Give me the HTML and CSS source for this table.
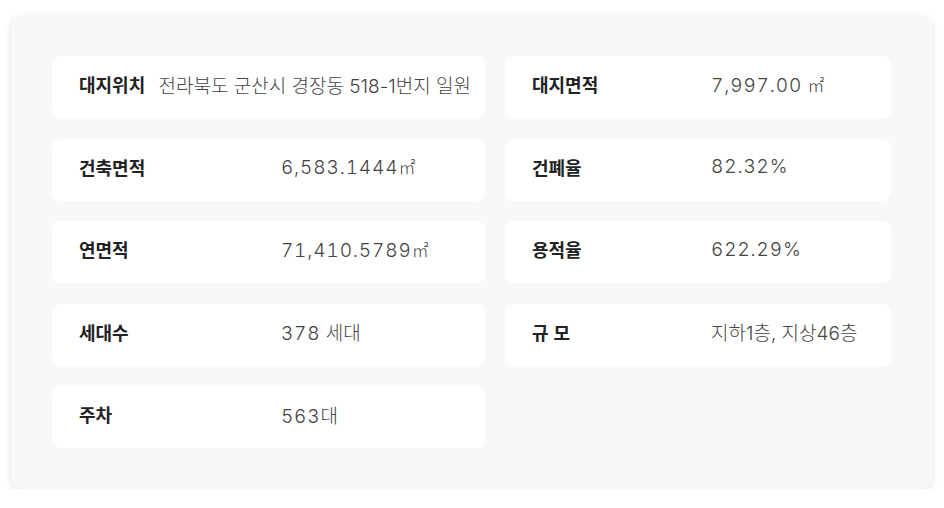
FILE: index.html
```html
<!DOCTYPE html>
<html lang="ko">
<head>
<meta charset="utf-8">
<link rel="stylesheet" href="styles.css">
</head>
<body>
<section class="panel">
  <div class="grid">
    <div class="card"><span class="label">대지위치</span><span class="value">전라북도 군산시 경장동 518-1번지 일원</span></div>
    <div class="card"><span class="label">대지면적</span><span class="value"><span class="num">7,997.00</span> <span class="unit">㎡</span></span></div>
    <div class="card"><span class="label">건축면적</span><span class="value"><span class="num">6,583.1444</span><span class="unit">㎡</span></span></div>
    <div class="card"><span class="label">건폐율</span><span class="value"><span class="num">82.32%</span></span></div>
    <div class="card"><span class="label">연면적</span><span class="value"><span class="num">71,410.5789</span><span class="unit">㎡</span></span></div>
    <div class="card"><span class="label">용적율</span><span class="value"><span class="num">622.29%</span></span></div>
    <div class="card"><span class="label">세대수</span><span class="value"><span class="num">378</span> 세대</span></div>
    <div class="card"><span class="label">규 모</span><span class="value">지하1층, 지상46층</span></div>
    <div class="card"><span class="label">주차</span><span class="value"><span class="num">563</span>대</span></div>
  </div>
</section>
</body>
</html>
```

FILE: styles.css
```css
html, body {
  margin: 0;
  padding: 0;
  background: #ffffff;
}
body {
  font-family: "Inter", "Noto Sans CJK KR", sans-serif;
}
.panel {
  margin: 15px 12px 0 11px;
  background: #f8f8f8;
  border-radius: 10px;
  box-shadow: 0 2px 6px rgba(0, 0, 0, 0.12);
  padding: 41px 40px 41px 41px;
  height: 474px;
  box-sizing: border-box;
}
.grid {
  display: grid;
  grid-template-columns: 433px 386px;
  grid-auto-rows: 62px;
  column-gap: 20px;
  row-gap: 20.5px;
}
.card {
  background: #ffffff;
  border-radius: 8px;
  display: flex;
  align-items: center;
  padding: 0 14px 6px 27px;
  box-sizing: border-box;
  overflow: hidden;
}
.label {
  flex: 0 1 48.7%;
  white-space: nowrap;
  font-family: "Noto Sans CJK KR", sans-serif;
  font-weight: 700;
  font-size: 18px;
  color: #222222;
  margin-right: 11px;
}
.value {
  flex: none;
  white-space: nowrap;
  font-size: 19px;
  font-weight: 300;
  color: #444444;
}
.num {
  letter-spacing: 0.9px;
  font-variant-numeric: tabular-nums;
}
.unit {
  font-size: 17px;
}
```
